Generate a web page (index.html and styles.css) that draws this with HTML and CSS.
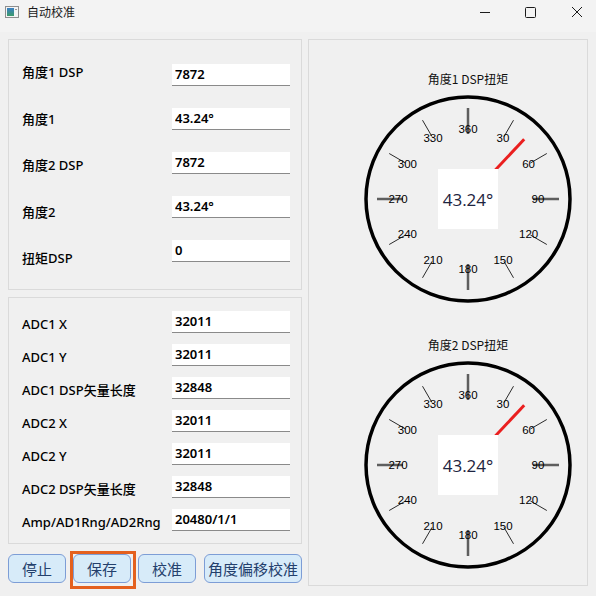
FILE: index.html
```html
<!DOCTYPE html>
<html lang="zh-CN">
<head>
    <meta charset="UTF-8">
    <meta name="viewport" content="width=device-width, initial-scale=1.0">
    <title>自动校准</title>
    <link rel="stylesheet" href="styles.css">
</head>
<body>

    <div class="titlebar">
        <svg class="app-icon" width="14" height="12" viewBox="0 0 14 12">
            <defs>
                <linearGradient id="iconFill" x1="0" y1="0" x2="0" y2="1">
                    <stop offset="0" stop-color="#3a7fc4"/>
                    <stop offset="1" stop-color="#3c9b6a"/>
                </linearGradient>
            </defs>
            <rect x="0.5" y="0.5" width="13" height="11" fill="#f4f4f4" stroke="#8e8e8e"/>
            <rect x="2" y="2" width="7" height="8" fill="url(#iconFill)"/>
            <rect x="10" y="3" width="2" height="1" fill="#9a9a9a"/>
        </svg>
        <span class="win-title">自动校准</span>
        <div class="win-controls">
            <svg width="46" height="32" viewBox="0 0 46 32"><line x1="22" y1="12.5" x2="32" y2="12.5" stroke="#1b1b1b"/></svg>
            <svg width="46" height="32" viewBox="0 0 46 32"><rect x="21.5" y="7.5" width="10" height="10" rx="1" fill="none" stroke="#1b1b1b"/></svg>
            <svg width="46" height="32" viewBox="0 0 46 32"><path d="M22 7 L32 17 M32 7 L22 17" stroke="#1b1b1b" fill="none"/></svg>
        </div>
    </div>

    <div class="main">
        <div class="left">
            <div class="panel angles">
                <div class="label-col">
                    <div class="label">角度1 DSP</div>
                    <div class="label">角度1</div>
                    <div class="label">角度2 DSP</div>
                    <div class="label">角度2</div>
                    <div class="label">扭矩DSP</div>
                </div>
                <div class="field-col">
                    <input class="field" type="text" value="7872">
                    <input class="field" type="text" value="43.24°">
                    <input class="field" type="text" value="7872">
                    <input class="field" type="text" value="43.24°">
                    <input class="field" type="text" value="0">
                </div>
            </div>

            <div class="panel adc">
                <div class="label">ADC1 X</div>
                <input class="field" type="text" value="32011">
                <div class="label">ADC1 Y</div>
                <input class="field" type="text" value="32011">
                <div class="label">ADC1 DSP矢量长度</div>
                <input class="field" type="text" value="32848">
                <div class="label">ADC2 X</div>
                <input class="field" type="text" value="32011">
                <div class="label">ADC2 Y</div>
                <input class="field" type="text" value="32011">
                <div class="label">ADC2 DSP矢量长度</div>
                <input class="field" type="text" value="32848">
                <div class="label">Amp/AD1Rng/AD2Rng</div>
                <input class="field" type="text" value="20480/1/1">
            </div>

            <div class="buttons">
                <button class="btn">停止</button>
                <button class="btn focused">保存</button>
                <button class="btn">校准</button>
                <button class="btn wide">角度偏移校准</button>
            </div>
        </div>

        <div class="panel gauges">
            <div class="gauge">
                <div class="gauge-title">角度1 DSP扭矩</div>
                <svg class="dial" width="236" height="250" viewBox="-118 -112 236 250">
                    <circle r="102" fill="none" stroke="#000" stroke-width="3.5"/>
                    <g class="tick major">
                        <line x1="0" y1="-65" x2="0" y2="-91"/>
                        <line x1="65" y1="0" x2="91" y2="0"/>
                        <line x1="0" y1="65" x2="0" y2="91"/>
                        <line x1="-65" y1="0" x2="-91" y2="0"/>
                    </g>
                    <g class="tick minor">
                        <line x1="36" y1="-62.4" x2="45.5" y2="-78.8"/>
                        <line x1="62.4" y1="-36" x2="78.8" y2="-45.5"/>
                        <line x1="62.4" y1="36" x2="78.8" y2="45.5"/>
                        <line x1="36" y1="62.4" x2="45.5" y2="78.8"/>
                        <line x1="-36" y1="62.4" x2="-45.5" y2="78.8"/>
                        <line x1="-62.4" y1="36" x2="-78.8" y2="45.5"/>
                        <line x1="-62.4" y1="-36" x2="-78.8" y2="-45.5"/>
                        <line x1="-36" y1="-62.4" x2="-45.5" y2="-78.8"/>
                    </g>
                    <g class="scale">
                        <text x="0" y="-70">360</text>
                        <text x="35" y="-60.6">30</text>
                        <text x="60.6" y="-35">60</text>
                        <text x="70" y="0">90</text>
                        <text x="60.6" y="35">120</text>
                        <text x="35" y="60.6">150</text>
                        <text x="0" y="70">180</text>
                        <text x="-35" y="60.6">210</text>
                        <text x="-60.6" y="35">240</text>
                        <text x="-70" y="0">270</text>
                        <text x="-60.6" y="-35">300</text>
                        <text x="-35" y="-60.6">330</text>
                    </g>
                    <!-- 指针 43.24° -->
                    <line class="needle" x1="0" y1="0" x2="56.2" y2="-59.7"/>
                    <rect x="-30" y="-30" width="60" height="60" fill="#fff"/>
                    <text class="readout" x="0" y="0">43.24°</text>
                </svg>
            </div>

            <div class="gauge">
                <div class="gauge-title">角度2 DSP扭矩</div>
                <svg class="dial" width="236" height="250" viewBox="-118 -112 236 250">
                    <circle r="102" fill="none" stroke="#000" stroke-width="3.5"/>
                    <g class="tick major">
                        <line x1="0" y1="-65" x2="0" y2="-91"/>
                        <line x1="65" y1="0" x2="91" y2="0"/>
                        <line x1="0" y1="65" x2="0" y2="91"/>
                        <line x1="-65" y1="0" x2="-91" y2="0"/>
                    </g>
                    <g class="tick minor">
                        <line x1="36" y1="-62.4" x2="45.5" y2="-78.8"/>
                        <line x1="62.4" y1="-36" x2="78.8" y2="-45.5"/>
                        <line x1="62.4" y1="36" x2="78.8" y2="45.5"/>
                        <line x1="36" y1="62.4" x2="45.5" y2="78.8"/>
                        <line x1="-36" y1="62.4" x2="-45.5" y2="78.8"/>
                        <line x1="-62.4" y1="36" x2="-78.8" y2="45.5"/>
                        <line x1="-62.4" y1="-36" x2="-78.8" y2="-45.5"/>
                        <line x1="-36" y1="-62.4" x2="-45.5" y2="-78.8"/>
                    </g>
                    <g class="scale">
                        <text x="0" y="-70">360</text>
                        <text x="35" y="-60.6">30</text>
                        <text x="60.6" y="-35">60</text>
                        <text x="70" y="0">90</text>
                        <text x="60.6" y="35">120</text>
                        <text x="35" y="60.6">150</text>
                        <text x="0" y="70">180</text>
                        <text x="-35" y="60.6">210</text>
                        <text x="-60.6" y="35">240</text>
                        <text x="-70" y="0">270</text>
                        <text x="-60.6" y="-35">300</text>
                        <text x="-35" y="-60.6">330</text>
                    </g>
                    <line class="needle" x1="0" y1="0" x2="56.2" y2="-59.7"/>
                    <rect x="-30" y="-30" width="60" height="60" fill="#fff"/>
                    <text class="readout" x="0" y="0">43.24°</text>
                </svg>
            </div>
        </div>
    </div>

</body>
</html>
```

FILE: styles.css
```css
* {
    margin: 0;
    padding: 0;
    box-sizing: border-box;
}

body {
    font-family: "Noto Sans", "Noto Sans CJK SC", sans-serif;
    background-color: #f0f0f0;
    color: #000;
    width: 596px;
    height: 596px;
    overflow: hidden;
}

/* 标题栏 */
.titlebar {
    height: 32px;
    background: #f3f3f3;
    display: flex;
    align-items: flex-start;
}

.app-icon {
    margin: 6px 0 0 5px;
}

.win-title {
    font-family: "Noto Sans CJK SC", sans-serif;
    font-size: 12px;
    line-height: 14px;
    margin: 5px 0 0 8px;
    color: #1a1a1a;
}

.win-controls {
    margin-left: auto;
    display: flex;
}

.win-controls svg {
    display: block;
}

/* 主区域 */
.main {
    display: flex;
    gap: 6px;
    padding: 7px 0 0 8px;
}

.left {
    width: 294px;
    display: flex;
    flex-direction: column;
}

.panel {
    border: 1px solid #dadada;
    background: #f0f0f0;
}

.label {
    font-family: "Noto Sans", "Noto Sans CJK SC", sans-serif;
    font-size: 13px;
    font-weight: 500;
    white-space: nowrap;
}

.field {
    width: 118px;
    height: 22px;
    border: none;
    border-bottom: 1px solid #8a8a8a;
    background: #fff;
    font-family: "Noto Sans", "Noto Sans CJK SC", sans-serif;
    font-size: 13px;
    font-weight: 600;
    color: #000;
    padding: 0 3px 2px;
    outline: none;
}

/* 角度面板 */
.angles {
    height: 251px;
    display: flex;
    padding-left: 13px;
}

.label-col {
    width: 150px;
    display: flex;
    flex-direction: column;
    gap: 26.5px;
    padding-top: 22px;
}

.label-col .label {
    line-height: 20px;
}

.field-col {
    display: flex;
    flex-direction: column;
    gap: 22px;
    padding-top: 24px;
}

/* ADC 面板 */
.adc {
    margin-top: 7px;
    display: grid;
    grid-template-columns: 150px 118px;
    row-gap: 11px;
    padding: 13px 0 12px 13px;
}

.adc .label {
    padding-top: 5px;
    line-height: 16px;
}

/* 按钮 */
.buttons {
    display: flex;
    gap: 7px;
    margin-top: 10px;
}

.btn {
    width: 58px;
    height: 29px;
    font-family: "Noto Sans CJK SC", sans-serif;
    font-size: 15px;
    color: #24406c;
    background: #d7ebf9;
    border: 1.5px solid #7d9dd6;
    border-radius: 6px;
    cursor: pointer;
    white-space: nowrap;
}

.btn.wide {
    width: 98px;
    margin-left: 1px;
}

/* 焦点框：直角，不跟随圆角 */
.btn.focused {
    position: relative;
}

.btn.focused::after {
    content: "";
    position: absolute;
    left: -4px;
    right: -6px;
    top: -4px;
    bottom: -7px;
    border: 3px solid #e4601e;
}

/* 仪表盘 */
.gauges {
    width: 280px;
    height: 547px;
    padding: 31px 0 0 40px;
    display: flex;
    flex-direction: column;
    align-items: center;
}

.gauge {
    display: flex;
    flex-direction: column;
    align-items: center;
}

.gauge-title {
    font-family: "Noto Sans CJK SC", sans-serif;
    font-size: 12px;
    line-height: 16px;
    color: #111;
}

.dial {
    display: block;
}

.tick.major line {
    stroke: #5e5e5e;
    stroke-width: 2.5;
}

.tick.minor line {
    stroke: #2a2a2a;
    stroke-width: 1;
}

.scale text {
    font-family: "Liberation Sans", sans-serif;
    font-size: 11.5px;
    fill: #000;
    text-anchor: middle;
    dominant-baseline: central;
}

.needle {
    stroke: #ea1f1f;
    stroke-width: 3;
}

.readout {
    font-family: "Open Sans", "Liberation Sans", sans-serif;
    font-size: 17px;
    fill: #1d2440;
    text-anchor: middle;
    dominant-baseline: central;
}
```
